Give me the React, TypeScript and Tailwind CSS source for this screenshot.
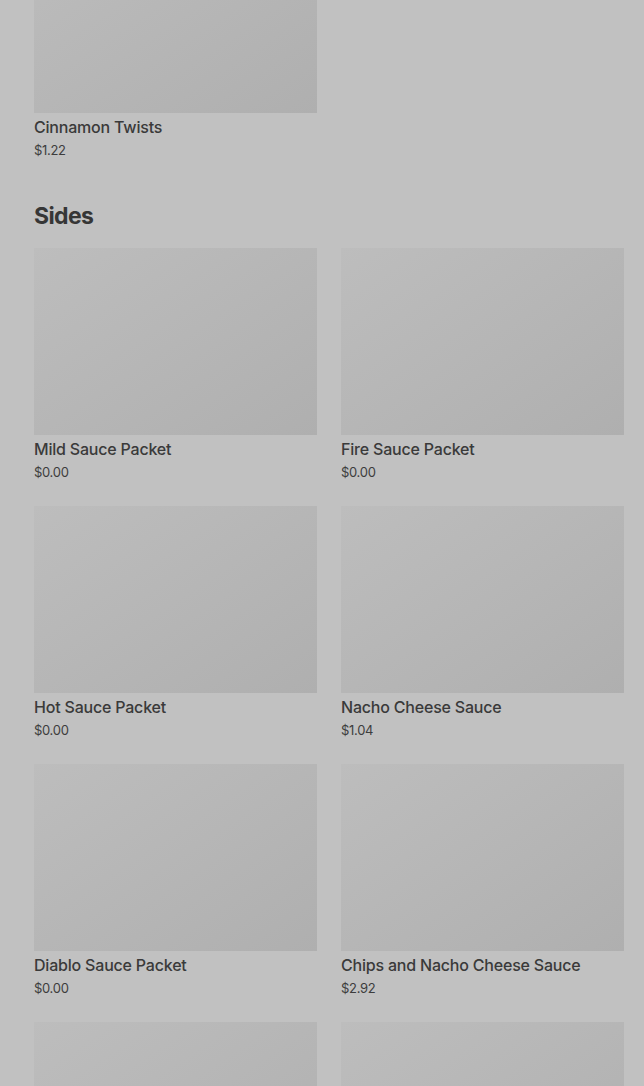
const Item = ({ name, price }: { name: string; price: string }) => (
  <div>
    <div className="h-[187px] bg-gradient-to-br from-[#bdbdbd] via-[#b6b6b6] to-[#afafaf]" />
    <p className="mt-1 text-[16px] leading-5 font-medium text-[#3a3a3a] tracking-[-0.2px]">{name}</p>
    <p className="mt-1 text-[13px] leading-[18px] text-[#3d3d3d] tracking-[-0.3px]">{price}</p>
  </div>
);

export default function App() {
  const sides = [
    { name: 'Mild Sauce Packet', price: '$0.00' },
    { name: 'Fire Sauce Packet', price: '$0.00' },
    { name: 'Hot Sauce Packet', price: '$0.00' },
    { name: 'Nacho Cheese Sauce', price: '$1.04' },
    { name: 'Diablo Sauce Packet', price: '$0.00' },
    { name: 'Chips and Nacho Cheese Sauce', price: '$2.92' },
    { name: '', price: '' },
    { name: '', price: '' },
  ];

  return (
    <div
      className="h-[1086px] overflow-hidden bg-[#c1c1c1] pl-[34px] pr-5"
      style={{ fontFamily: 'Inter, "Noto Sans", sans-serif' }}
    >
      <div className="-mt-[74px] grid grid-cols-2 gap-x-6">
        <Item name="Cinnamon Twists" price="$1.22" />
      </div>

      <h2 className="mt-[41px] mb-4 text-[23px] leading-8 font-bold text-[#363636] tracking-[-0.6px]">
        Sides
      </h2>
      <div className="grid grid-cols-2 gap-x-6 gap-y-[25px]">
        {sides.map((s, idx) => (
          <Item key={idx} name={s.name} price={s.price} />
        ))}
      </div>
    </div>
  );
}
